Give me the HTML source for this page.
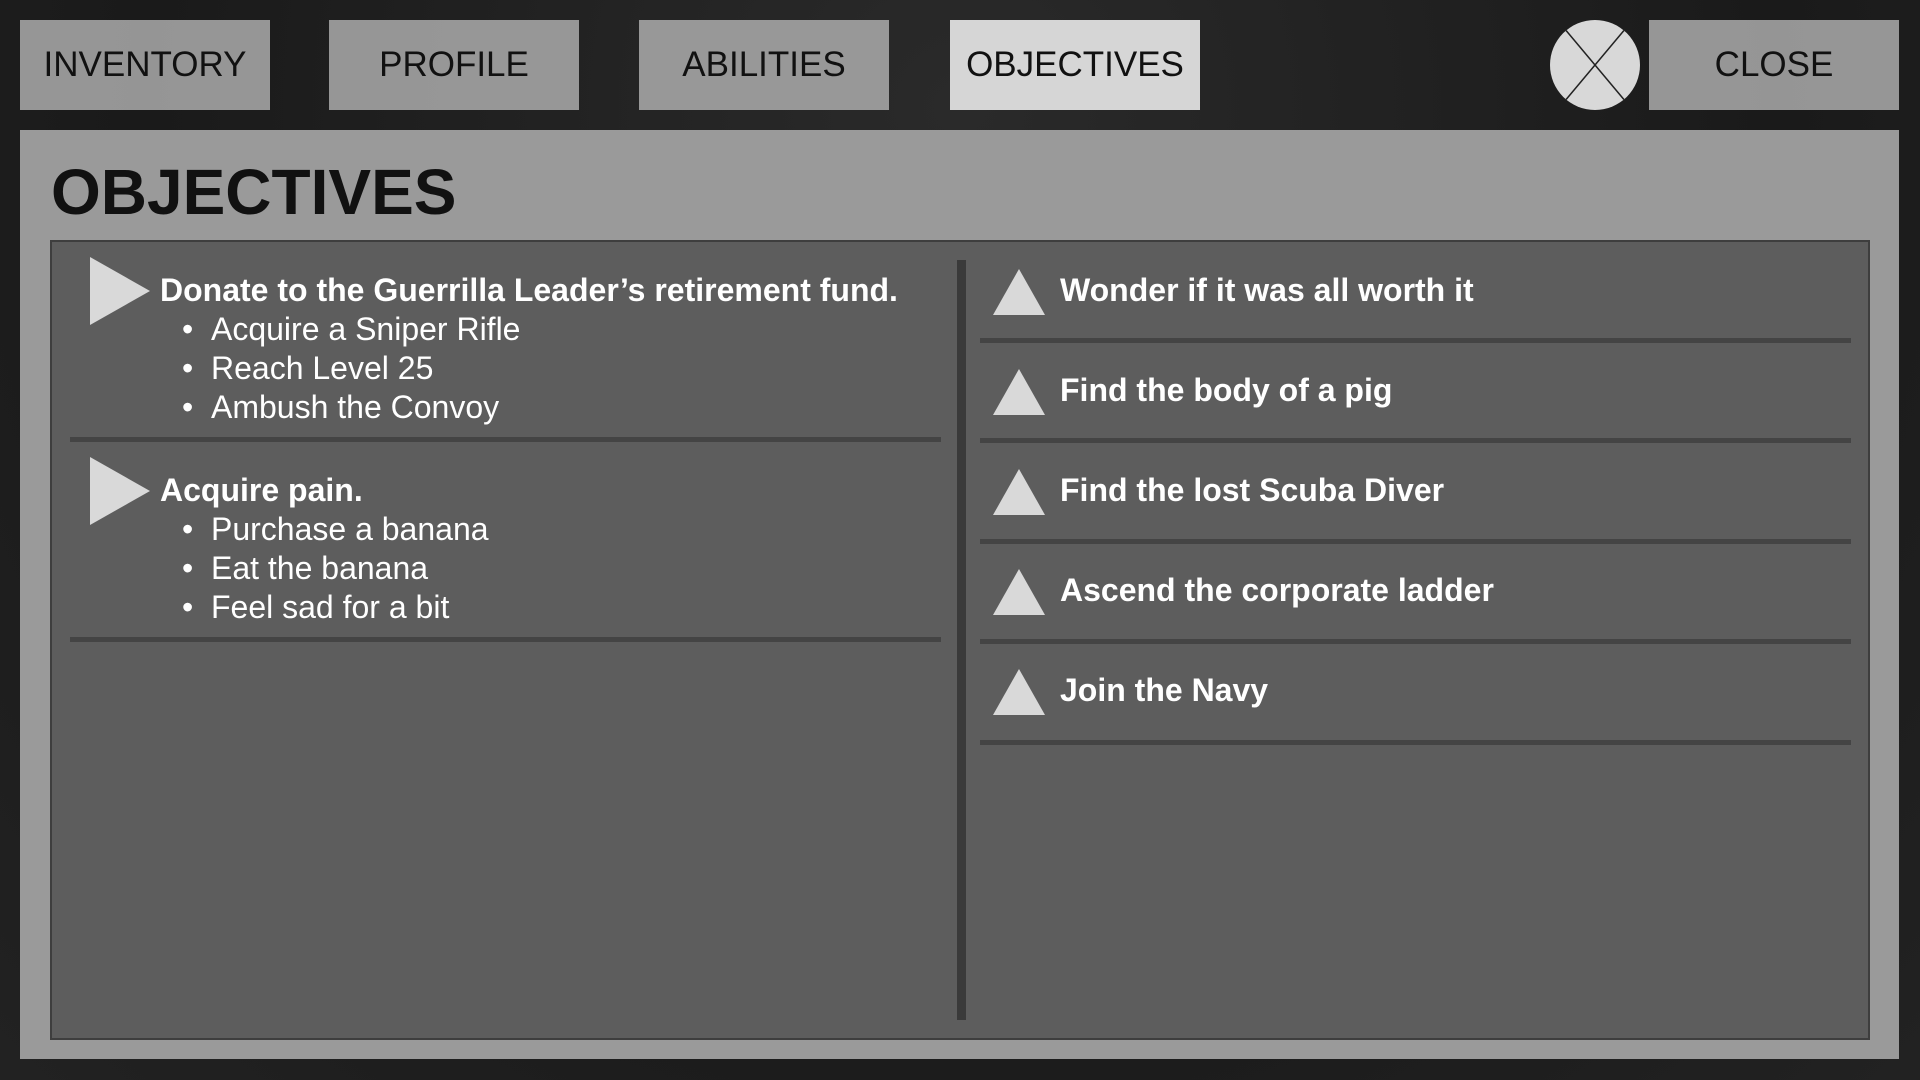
<!DOCTYPE html>
<html><head><meta charset="utf-8"><style>
*{margin:0;padding:0;box-sizing:border-box}
body{width:1920px;height:1080px;overflow:hidden;font-family:"Liberation Sans",sans-serif;background:radial-gradient(ellipse at 50% 10%,#2a2a2a,#1a1a1a 60%,#222 100%);position:relative}
.tab{position:absolute;top:20px;height:90px;width:250px;background:rgba(185,185,185,0.78);color:#111;font-size:35px;display:flex;align-items:center;justify-content:center}
.tab.act{background:#d6d6d6}
.circ{position:absolute;left:1550px;top:20px;width:90px;height:90px;border-radius:50%;background:#d8d8d8;overflow:hidden}
.panel{position:absolute;left:20px;top:130px;width:1879px;height:929px;background:#9a9a9a}
h1{position:absolute;left:31px;top:25px;font-size:64px;font-weight:bold;color:#111}
.box{position:absolute;left:30px;top:110px;width:1820px;height:800px;background:#5d5d5d;border:2px solid #3e3e3e}
.vd{position:absolute;left:905px;top:18px;width:9px;height:760px;background:#3a3a3a}
.abs{position:absolute}
.hd{color:#fff;font-weight:bold;font-size:32px;white-space:nowrap}
.bl{color:#fff;font-size:32px;white-space:nowrap}
.sep{position:absolute;height:5px;background:#444}
.tr{position:absolute;width:0;height:0;border-top:34px solid transparent;border-bottom:34px solid transparent;border-left:60px solid #d9d9d9}
.tu{position:absolute;width:0;height:0;border-left:26px solid transparent;border-right:26px solid transparent;border-bottom:46px solid #d9d9d9}
</style></head><body>
<div class="tab" style="left:20px">INVENTORY</div>
<div class="tab" style="left:329px">PROFILE</div>
<div class="tab" style="left:639px">ABILITIES</div>
<div class="tab act" style="left:950px">OBJECTIVES</div>
<div class="circ"><svg width="90" height="90"><line x1="14" y1="8" x2="76" y2="82" stroke="#222" stroke-width="1.5"/><line x1="76" y1="8" x2="14" y2="82" stroke="#222" stroke-width="1.5"/></svg></div>
<div class="tab" style="left:1649px">CLOSE</div>
<div class="panel">
<h1>OBJECTIVES</h1>
<div class="box">
<div class="vd"></div>
<div class="tr" style="left:38px;top:15px"></div>
<div class="abs hd" style="left:108px;top:30px">Donate to the Guerrilla Leader’s retirement fund.</div>
<div class="abs bl" style="left:130px;top:68px;line-height:39px">•&nbsp;&nbsp;Acquire a Sniper Rifle<br>•&nbsp;&nbsp;Reach Level 25<br>•&nbsp;&nbsp;Ambush the Convoy</div>
<div class="sep" style="left:18px;top:195px;width:871px"></div>
<div class="tr" style="left:38px;top:215px"></div>
<div class="abs hd" style="left:108px;top:230px">Acquire pain.</div>
<div class="abs bl" style="left:130px;top:268px;line-height:39px">•&nbsp;&nbsp;Purchase a banana<br>•&nbsp;&nbsp;Eat the banana<br>•&nbsp;&nbsp;Feel sad for a bit</div>
<div class="sep" style="left:18px;top:395px;width:871px"></div>
<div class="tu" style="left:941px;top:27px"></div>
<div class="abs hd" style="left:1008px;top:30px">Wonder if it was all worth it</div>
<div class="sep" style="left:928px;top:96px;width:871px"></div>
<div class="tu" style="left:941px;top:127px"></div>
<div class="abs hd" style="left:1008px;top:130px">Find the body of a pig</div>
<div class="sep" style="left:928px;top:196px;width:871px"></div>
<div class="tu" style="left:941px;top:227px"></div>
<div class="abs hd" style="left:1008px;top:230px">Find the lost Scuba Diver</div>
<div class="sep" style="left:928px;top:297px;width:871px"></div>
<div class="tu" style="left:941px;top:327px"></div>
<div class="abs hd" style="left:1008px;top:330px">Ascend the corporate ladder</div>
<div class="sep" style="left:928px;top:397px;width:871px"></div>
<div class="tu" style="left:941px;top:427px"></div>
<div class="abs hd" style="left:1008px;top:430px">Join the Navy</div>
<div class="sep" style="left:928px;top:498px;width:871px"></div>
</div>
</div>
</body></html>
